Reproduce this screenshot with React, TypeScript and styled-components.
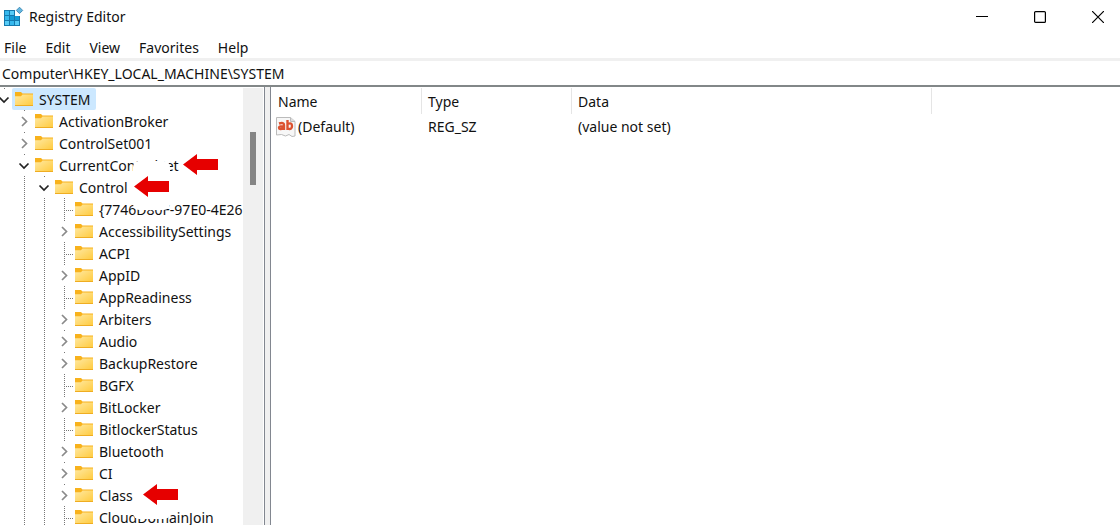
import React from "react";
import styled, { createGlobalStyle, css } from "styled-components";

const Global = createGlobalStyle`
  * { box-sizing: border-box; }
  body {
    margin: 0;
    background: #fff;
    color: #111;
    font: 14px/22px "Segoe UI Variable", "Noto Sans", "Open Sans", sans-serif;
  }
  button { font: inherit; color: inherit; background: none; border: 0; padding: 0; }
  svg { display: block; flex: none; }
`;

const Window = styled.main`
  height: 100vh;
  display: flex;
  flex-direction: column;
  overflow: hidden;
`;

const TitleBar = styled.header`
  display: flex;
  align-items: center;
  flex: none;
  height: 34px;
  padding-left: 4px;
`;

const Title = styled.h1`
  flex: 1;
  margin: 0 0 0 5px;
  font-size: 14px;
  font-weight: 400;
`;

const CaptionButtons = styled.div`
  display: flex;
  align-items: center;
  gap: 22px;
  padding-right: 4px;
`;

const CaptionButton = styled.button`
  width: 36px;
  height: 32px;
  display: grid;
  place-items: center;
`;

const MenuBar = styled.nav`
  display: flex;
  flex: none;
  gap: 19px;
  height: 24px;
  padding: 0 4px;
`;

const MenuButton = styled.button`
  height: 28px;
`;

const AddressBar = styled.input`
  flex: none;
  width: 100%;
  height: 29px;
  padding: 0 2px;
  border: 0;
  border-top: 3px solid #f0f0f0;
  border-bottom: 2px solid #828788;
  outline: 0;
  font: inherit;
  color: inherit;
`;

const Panes = styled.div`
  flex: 1;
  min-height: 0;
  display: flex;
`;

const TreePane = styled.section`
  flex: none;
  width: 265px;
  display: flex;
  padding-top: 1px;
  padding-right: 1px;
  border-right: 1px solid #828790;
`;

const Tree = styled.ul`
  flex: 1;
  min-width: 0;
  margin: 0;
  padding: 0;
  list-style: none;
  overflow: hidden;
`;

const Splitter = styled.div`
  flex: none;
  width: 6px;
  background: #f0f0f0;
  border-right: 1px solid #828790;
`;

const ScrollTrack = styled.div`
  flex: none;
  width: 20px;
  padding: 44px 7px 0;
  background: #f0f0f0;
`;

const ScrollThumb = styled.div`
  height: 53px;
  background: #858585;
`;

const Node = styled.li`
  position: relative;
  display: flex;
  height: 22px;
  margin-left: -5px;
  white-space: nowrap;
`;

const verticalDots = "repeating-linear-gradient(#777 0 1px, transparent 1px 2px) 9px 0 / 1px 100% no-repeat";

const Cell = styled.span<{ $kind: "empty" | "line" | "leaf" }>`
  flex: none;
  width: 20px;
  ${({ $kind }) => $kind === "line" && css`background: ${verticalDots};`}
  ${({ $kind }) =>
    $kind === "leaf" &&
    css`
      background:
        ${verticalDots},
        repeating-linear-gradient(90deg, #777 0 1px, transparent 1px 2px) 11px 12px / 7px 1px no-repeat;
    `}
`;

const Expander = styled.button`
  flex: none;
  width: 20px;
  padding-right: 2px;
  display: grid;
  place-items: center;
  background: linear-gradient(#777, #777) 9px 0 / 1px 1px no-repeat;
`;

const Item = styled.span<{ $selected?: boolean }>`
  display: flex;
  align-items: center;
  gap: 6px;
  margin-left: -3px;
  padding: 0 5px 0 3px;
  border-radius: 2px;
  background: ${({ $selected }) => ($selected ? "#cce8ff" : "transparent")};
`;

const KeyName = styled.span`
  line-height: 20px;
  padding-top: 2px;
`;

const Pointer = styled.span<{ $left: number }>`
  position: absolute;
  z-index: 2;
  top: 0;
  left: ${({ $left }) => $left}px;
`;

const Erased = styled.span<{ $top: number; $height: number }>`
  position: absolute;
  z-index: 1;
  left: 138px;
  top: ${({ $top }) => $top}px;
  width: 37px;
  height: ${({ $height }) => $height}px;
  border-radius: 6px;
  background: #fff;
`;

const ListPane = styled.section`
  flex: 1;
  min-width: 0;
  overflow: hidden;
  padding-top: 1px;
`;

const Table = styled.table`
  width: 100%;
  table-layout: fixed;
  border-collapse: separate;
  border-spacing: 0;
`;

const Head = styled.th`
  height: 26px;
  padding: 2px 6px 0;
  border-right: 1px solid #e5e5e5;
  font-weight: 400;
  text-align: left;
  &:first-child { padding-left: 7px; }
  &:last-child { border-right: 0; }
`;

const Data = styled.td`
  height: 24px;
  padding: 2px 6px 0;
  white-space: nowrap;
  &:first-child { padding-left: 5px; }
`;

const ValueName = styled.span`
  display: flex;
  align-items: center;
  gap: 2px;
`;

const AppLogo = () => (
  <svg width="20" height="20" viewBox="0 0 20 20" aria-hidden="true">
    <path d="M0 3h11v6h5v10H0z" fill="#1479ae" />
    <path d="M1 4h4v4H1zM1 9h4v4H1zM6 14h4v4H6z" fill="#35b8ee" />
    <path d="M6 4h4v4H6zM1 14h4v4H1zM11 14h4v4h-4z" fill="#56cbf6" />
    <path d="M6 9h4v4H6zM11 9h4v4h-4z" fill="#139bd5" />
    <path d="M15.500 .2l3.200 3.200-3.200 3.200-3.200-3.200z" fill="#64b7df" stroke="#2c7cab" strokeWidth=".8" />
  </svg>
);

const Folder = () => (
  <svg width="18" height="14" viewBox="0 0 18 14" aria-hidden="true">
    <defs>
      <linearGradient id="folder" x1="0" y1="0" x2="1" y2="1">
        <stop offset="0" stopColor="#ffe9a3" />
        <stop offset="1" stopColor="#ffca3c" />
      </linearGradient>
    </defs>
    <path d="M0 0h6l1.500 1.500H18V5H0z" fill="#f8b21c" />
    <path d="M0 4.300h6l1.500-1.800H18V14H0z" fill="url(#folder)" />
    <path d="M0 13h18v1H0z" fill="#efad22" />
  </svg>
);

const Chevron = ({ open }: { open: boolean }) => (
  <svg width="12" height="12" viewBox="0 0 12 12" fill="none" strokeWidth="1.700" aria-hidden="true">
    {open ? <path d="M1.500 4.500L6 9l4.500-4.500" stroke="#222" /> : <path d="M4 2l4.500 4.500L4 11" stroke="#8a8a8a" />}
  </svg>
);

const RedArrow = () => (
  <svg width="35" height="21" viewBox="0 0 35 21" aria-hidden="true">
    <path d="M0 10.500L14 0v5h21v11H14v5z" fill="#e60000" />
  </svg>
);

const StringValue = () => (
  <svg width="20" height="20" viewBox="0 0 20 20" aria-hidden="true">
    <path d="M.5.500h14l4.500 4v14.500l-3 .5-3-2-3.500 1.500-4-1.500-5 .5z" fill="#f7f7f7" stroke="#bbb" />
    <path d="M14.500.500v4H19" fill="#ddd" stroke="#bbb" />
    <g fill="none" stroke="#dc5230" strokeWidth="2.400">
      <path d="M3 6.500q5-1.600 5 1.500v5M8 9.200q-5-.2-5 1.500 0 2.400 5 .4" />
      <path d="M11.500 3v10M11.500 7q4.500-2 4.500 2 0 4.200-4.500 2.500" />
    </g>
  </svg>
);

type Key = { name: string; depth: number; state: "open" | "closed" | "leaf"; pointer?: number; erased?: [number, number] };

const child = (name: string, state: Key["state"] = "closed"): Key => ({ name, depth: 3, state });

const keys: Key[] = [
  { name: "SYSTEM", depth: 0, state: "open" },
  { name: "ActivationBroker", depth: 1, state: "closed" },
  { name: "ControlSet001", depth: 1, state: "closed" },
  { name: "CurrentControlSet", depth: 1, state: "open", pointer: 188 },
  { name: "Control", depth: 2, state: "open", pointer: 139, erased: [-15, 49] },
  child("{7746D80F-97E0-4E26", "leaf"),
  child("AccessibilitySettings"),
  child("ACPI", "leaf"),
  child("AppID"),
  child("AppReadiness", "leaf"),
  child("Arbiters"),
  child("Audio"),
  child("BackupRestore"),
  child("BGFX", "leaf"),
  child("BitLocker"),
  child("BitlockerStatus", "leaf"),
  child("Bluetooth"),
  child("CI"),
  { name: "Class", depth: 3, state: "closed", pointer: 148, erased: [0, 35] },
  child("CloudDomainJoin", "leaf"),
];

const TreeNode = ({ name, depth, state, pointer, erased }: Key) => (
  <Node>
    {Array.from({ length: depth }, (_, i) => (
      <Cell key={i} $kind={i === 0 ? "empty" : "line"} />
    ))}
    {state === "leaf" ? (
      <Cell $kind="leaf" />
    ) : (
      <Expander aria-label={`${state === "open" ? "Collapse" : "Expand"} ${name}`}>
        <Chevron open={state === "open"} />
      </Expander>
    )}
    <Item $selected={depth === 0}>
      <Folder />
      <KeyName>{name}</KeyName>
    </Item>
    {erased && <Erased $top={erased[0]} $height={erased[1]} />}
    {pointer && (
      <Pointer $left={pointer}>
        <RedArrow />
      </Pointer>
    )}
  </Node>
);

const App = () => (
  <>
    <Global />
    <Window>
      <TitleBar>
        <AppLogo />
        <Title>Registry Editor</Title>
        <CaptionButtons>
          <CaptionButton aria-label="Minimize">
            <svg width="12" height="12"><path d="M0 5.500h12" stroke="#000" /></svg>
          </CaptionButton>
          <CaptionButton aria-label="Maximize">
            <svg width="12" height="12"><rect x=".6" y=".6" width="10.800" height="10.800" rx="1" fill="none" stroke="#000" strokeWidth="1.200" /></svg>
          </CaptionButton>
          <CaptionButton aria-label="Close">
            <svg width="12" height="12"><path d="M0 0l12 12M12 0L0 12" stroke="#000" strokeWidth="1.200" /></svg>
          </CaptionButton>
        </CaptionButtons>
      </TitleBar>
      <MenuBar>
        {["File", "Edit", "View", "Favorites", "Help"].map((m) => (
          <MenuButton key={m}>{m}</MenuButton>
        ))}
      </MenuBar>
      <AddressBar aria-label="Address" defaultValue="Computer\HKEY_LOCAL_MACHINE\SYSTEM" />
      <Panes>
        <TreePane>
          <Tree>
            {keys.map((k) => (
              <TreeNode key={k.name} {...k} />
            ))}
          </Tree>
          <ScrollTrack>
            <ScrollThumb />
          </ScrollTrack>
        </TreePane>
        <Splitter />
        <ListPane>
          <Table>
            <colgroup>
              <col width="151" />
              <col width="150" />
              <col width="360" />
              <col />
            </colgroup>
            <thead>
              <tr>
                <Head>Name</Head>
                <Head>Type</Head>
                <Head>Data</Head>
                <Head as="td" />
              </tr>
            </thead>
            <tbody>
              <tr>
                <Data>
                  <ValueName>
                    <StringValue />
                    (Default)
                  </ValueName>
                </Data>
                <Data>REG_SZ</Data>
                <Data>(value not set)</Data>
                <Data />
              </tr>
            </tbody>
          </Table>
        </ListPane>
      </Panes>
    </Window>
  </>
);

export default App;
